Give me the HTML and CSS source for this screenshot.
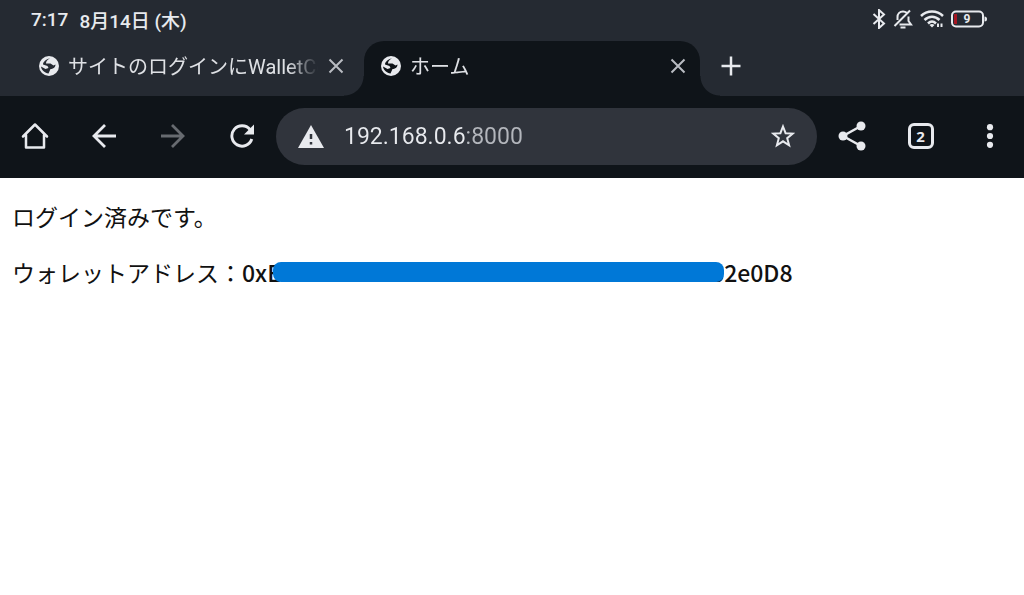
FILE: index.html
```html
<!DOCTYPE html>
<html lang="ja">

<head>
    <meta charset="UTF-8">
    <meta name="viewport" content="width=device-width, initial-scale=1.0">
    <title>ホーム</title>
    <link rel="stylesheet" href="styles.css">
</head>

<body>

    <header>
        <div class="status-bar">
            <span>7:17</span>
            <span>8月14日 (木)</span>
            <div class="status-icons">
                <!-- Bluetooth -->
                <svg width="14" height="20" viewBox="0 0 14 20" fill="none" stroke="currentColor" stroke-width="2">
                    <path d="M1.500 5L12 14.500L7 19V1L12 5.500L1.500 15" />
                </svg>
                <!-- 通知オフ -->
                <svg width="20" height="20" viewBox="0 0 20 20" fill="none" stroke="currentColor" stroke-width="2">
                    <path d="M4.500 11V8C4.500 5 6.500 2.500 10 2.500C11.500 2.500 12.800 3 13.800 3.800M15.500 7.500V12L18 15.500H6.500M1.500 17L17 1.500" />
                    <path d="M7.500 18.500H12.500" />
                </svg>
                <!-- Wi-Fi -->
                <svg width="24" height="20" viewBox="0 0 24 20" fill="none" stroke="currentColor" stroke-width="2.500">
                    <path d="M1 7C7 1 17 1 23 7M4.500 11C9 6.500 15 6.500 19.500 11M8 14.500C10.500 12 13.500 12 16 14.500" />
                    <path d="M12 18.500L9.500 16Q12 14 14.500 16Z" fill="currentColor" stroke="none" />
                    <path d="M18 14.500V18M21.500 14.500V18" stroke-width="2" />
                </svg>
                <!-- バッテリー -->
                <svg width="36" height="18" viewBox="0 0 36 18">
                    <rect x="1" y="1.500" width="31" height="15" rx="4" fill="none" stroke="currentColor" stroke-width="2" />
                    <rect x="3" y="4" width="3" height="10" fill="#a51622" />
                    <path d="M33.500 6.500Q36 6.500 36 9Q36 11.500 33.500 11.500Z" fill="currentColor" />
                    <text class="battery-level" x="16" y="13" text-anchor="middle">9</text>
                </svg>
            </div>
        </div>

        <div class="tabs">
            <div class="tab">
                <svg class="globe" width="20" height="20" viewBox="0 0 20 20">
                    <circle cx="10" cy="10" r="10" fill="#e8eaee" />
                    <path d="M11 2.200C8 4 7 5 7 7.500H11.500L14.500 9.500L16.500 8.500C16.500 11.500 14 13 11.500 13L9.500 17.500C6 17 2.500 14.500 2 10.500L6.500 13L9.500 12L8.500 10L4 8.500C4 6 7 3 11 2.200Z" fill="#252a32" />
                </svg>
                <a href="#" class="tab-title">サイトのログインにWalletCo</a>
                <button class="tab-close" aria-label="閉じる">
                    <svg width="16" height="16" viewBox="0 0 16 16" stroke="currentColor" stroke-width="2"><path d="M1.500 1.500L14.500 14.500M14.500 1.500L1.500 14.500" /></svg>
                </button>
            </div>
            <div class="tab active">
                <svg class="globe" width="20" height="20" viewBox="0 0 20 20">
                    <circle cx="10" cy="10" r="10" fill="#e8eaee" />
                    <path d="M11 2.200C8 4 7 5 7 7.500H11.500L14.500 9.500L16.500 8.500C16.500 11.500 14 13 11.500 13L9.500 17.500C6 17 2.500 14.500 2 10.500L6.500 13L9.500 12L8.500 10L4 8.500C4 6 7 3 11 2.200Z" fill="#0f1419" />
                </svg>
                <a href="#" class="tab-title">ホーム</a>
                <button class="tab-close" aria-label="閉じる">
                    <svg width="16" height="16" viewBox="0 0 16 16" stroke="currentColor" stroke-width="2"><path d="M1.500 1.500L14.500 14.500M14.500 1.500L1.500 14.500" /></svg>
                </button>
            </div>
            <button class="new-tab" aria-label="新しいタブ">
                <svg width="20" height="20" viewBox="0 0 20 20" stroke="currentColor" stroke-width="2.500"><path d="M10 0.500V19.500M0.500 10H19.500" /></svg>
            </button>
        </div>

        <nav class="toolbar">
            <button class="tool-btn" aria-label="ホーム">
                <svg width="28" height="28" viewBox="0 0 28 28" fill="none" stroke="currentColor" stroke-width="2.500" stroke-linejoin="round" stroke-linecap="round">
                    <path d="M2 14.500L14 2.500L26 14.500M5 13V25.500H23V13" />
                </svg>
            </button>
            <button class="tool-btn" aria-label="戻る">
                <svg width="24" height="24" viewBox="0 0 24 24" fill="none" stroke="currentColor" stroke-width="2.800">
                    <path d="M24 12H2.500M13 1L2 12L13 23" />
                </svg>
            </button>
            <button class="tool-btn" aria-label="進む" disabled>
                <svg width="24" height="24" viewBox="0 0 24 24" fill="none" stroke="currentColor" stroke-width="2.800">
                    <path d="M0 12H21.500M11 1L22 12L11 23" />
                </svg>
            </button>
            <button class="tool-btn" aria-label="再読み込み">
                <svg width="24" height="24" viewBox="0 0 24 24">
                    <path d="M20 5.500A10.200 10.200 0 1 0 21.800 15" fill="none" stroke="currentColor" stroke-width="2.900" />
                    <path d="M24 0.500V10.500H14Z" fill="currentColor" />
                </svg>
            </button>

            <div class="address-bar">
                <svg width="26" height="23" viewBox="0 0 26 23">
                    <path d="M13 0L26 23H0Z" fill="#e8eaee" />
                    <path d="M13 9V14M13 17V19.500" stroke="#30343c" stroke-width="2.500" />
                </svg>
                <input type="text" class="url" value="192.168.0.6:8000" aria-label="アドレス">
                <button class="star-btn" aria-label="ブックマーク">
                    <svg width="24" height="24" viewBox="0 0 24 24" fill="none" stroke="currentColor" stroke-width="2">
                        <path d="M12 2.500L14.600 9.200L21.800 9.600L16.200 14.200L18.100 21.300L12 17.300L5.900 21.300L7.800 14.200L2.200 9.600L9.400 9.200Z" />
                    </svg>
                </button>
            </div>

            <button class="tool-btn" aria-label="共有">
                <svg width="28" height="30" viewBox="0 0 28 30" fill="currentColor">
                    <path d="M23 5L5 15L23 25" fill="none" stroke="currentColor" stroke-width="2.500" />
                    <circle cx="23" cy="5" r="4.500" />
                    <circle cx="5" cy="15" r="4.500" />
                    <circle cx="23" cy="25" r="4.500" />
                </svg>
            </button>
            <button class="tool-btn" aria-label="タブ一覧">
                <span class="tab-count">2</span>
            </button>
            <button class="tool-btn" aria-label="メニュー">
                <svg width="8" height="24" viewBox="0 0 8 24" fill="currentColor">
                    <circle cx="4" cy="3.200" r="3.100" />
                    <circle cx="4" cy="12" r="3.100" />
                    <circle cx="4" cy="20.800" r="3.100" />
                </svg>
            </button>
        </nav>
    </header>

    <main>
        <p>ログイン済みです。</p>
        <p class="wallet">ウォレットアドレス：<strong>0xE</strong><span class="mask"></span><strong>62e0D8</strong></p>
    </main>

</body>

</html>
```
FILE: styles.css
```css
body {
    font-family: "Noto Sans CJK JP", sans-serif;
    margin: 0;
    background-color: #fff;
    color: #111;
}

header {
    background-color: #252a32;
    color: #e8eaee;
}

button {
    display: flex;
    align-items: center;
    justify-content: center;
    padding: 0;
    border: none;
    background: none;
    color: inherit;
    cursor: pointer;
}

.status-bar {
    display: flex;
    align-items: center;
    gap: 11px;
    height: 41px;
    padding: 0 37px 3px 31px;
    box-sizing: border-box;
    font-family: Roboto, "Noto Sans CJK JP", sans-serif;
    font-size: 19px;
    font-weight: 500;
}

.status-icons {
    display: flex;
    align-items: center;
    gap: 7px;
    margin-left: auto;
}

.battery-level {
    font-size: 12px;
    font-weight: 700;
    fill: #e8eaee;
}

.tabs {
    display: flex;
    gap: 6px;
    height: 55px;
    padding-left: 22px;
}

.tab {
    position: relative;
    display: flex;
    align-items: center;
    flex: 0 1 336px;
    min-width: 0;
    padding: 0 14px 6px 17px;
    box-sizing: border-box;
}

.tab.active {
    background-color: #0f1419;
    border-radius: 20px 20px 0 0;
}

/* タブ下部の外側カーブ */
.tab.active::before,
.tab.active::after {
    content: "";
    position: absolute;
    bottom: 0;
    width: 20px;
    height: 20px;
}

.tab.active::before {
    right: 100%;
    background: radial-gradient(circle at 0 0, transparent 19px, #0f1419 20px);
}

.tab.active::after {
    left: 100%;
    background: radial-gradient(circle at 100% 0, transparent 19px, #0f1419 20px);
}

.globe {
    flex: none;
}

.tab-title {
    flex: 1;
    margin: 0 10px 0 9px;
    overflow: hidden;
    white-space: nowrap;
    color: #dfe1e5;
    font-family: Roboto, "Noto Sans CJK JP", sans-serif;
    font-size: 20px;
    text-decoration: none;
    mask-image: linear-gradient(to right, #000 88%, transparent);
}

.tab-close {
    flex: none;
    color: #b9bcc2;
}

.new-tab {
    width: 50px;
    padding-bottom: 6px;
}

.toolbar {
    display: flex;
    align-items: center;
    height: 82px;
    padding-bottom: 2px;
    box-sizing: border-box;
    background-color: #0f1419;
}

.tool-btn {
    flex: none;
    width: 69px;
    height: 57px;
}

.tool-btn:disabled {
    color: #676b70;
}

.address-bar {
    display: flex;
    align-items: center;
    flex: 1;
    min-width: 0;
    height: 57px;
    padding: 0 22px;
    box-sizing: border-box;
    border-radius: 29px;
    background-color: #30343c;
}

.url {
    flex: 1;
    min-width: 0;
    margin: 0 20px;
    padding: 0;
    border: none;
    outline: none;
    font-family: Roboto, sans-serif;
    font-size: 23px;
    /* ポート番号だけ薄くする */
    background: linear-gradient(to right, #e8eaee 121px, #b3b6bc 121px);
    background-clip: text;
    -webkit-background-clip: text;
    color: transparent;
}

.tab-count {
    width: 26px;
    height: 26px;
    box-sizing: border-box;
    border: 3px solid #e8eaee;
    border-radius: 6px;
    font-family: "Noto Sans", sans-serif;
    font-size: 15px;
    font-weight: 700;
    line-height: 20px;
}

main {
    padding: 21px 12px;
    font-size: 23px;
    line-height: 34px;
}

main p {
    margin: 0 0 22px;
}

.wallet {
    display: flex;
    align-items: center;
}

.wallet strong {
    font-weight: 500;
}

/* アドレスの伏せ字 */
.mask {
    position: relative;
    width: 451px;
    height: 20px;
    margin: 0 -13px 0 -8px;
    border-radius: 8px;
    background-color: #0078d7;
}
```
